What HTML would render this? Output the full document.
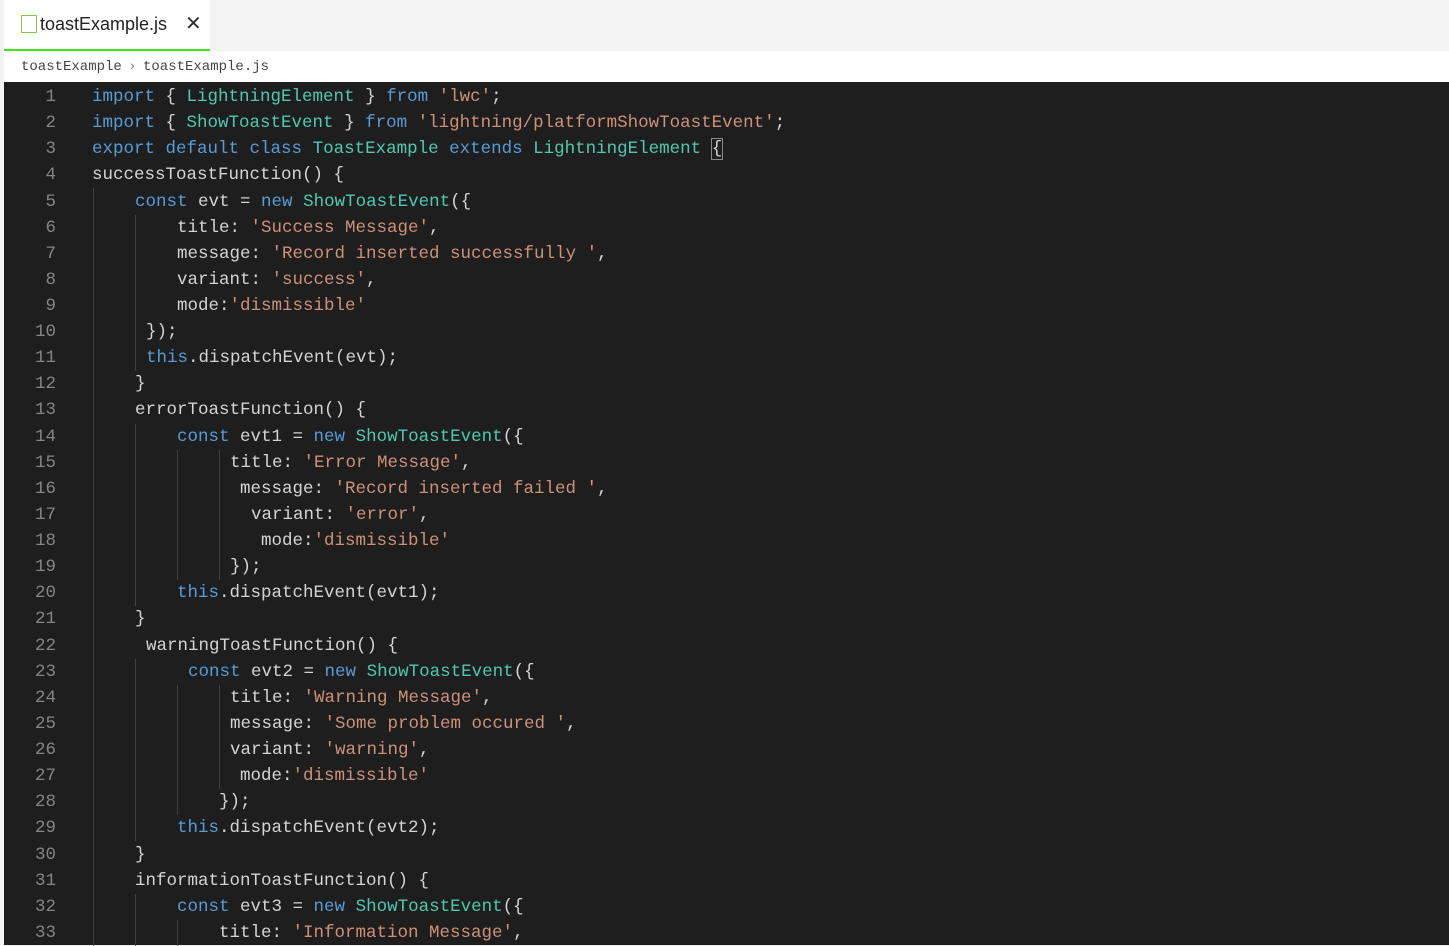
<!DOCTYPE html>
<html><head><style>
body{margin:0;width:1449px;height:945px;overflow:hidden;background:#f3f3f3;font-family:"Liberation Sans",sans-serif;position:relative}
.tab{position:absolute;left:4px;top:0;width:206px;height:49px;background:#fff;border-bottom:2px solid #3ee61c}
.tab .ic{position:absolute;left:17px;top:15px;width:14px;height:16px;border:1px solid #8bc34a}
.tab .t{position:absolute;left:36px;top:14px;font-size:18px;color:#222}
.tab .x{position:absolute;left:181px;top:11px;font-size:20px;color:#333}
.bc{position:absolute;left:4px;top:51px;width:1445px;height:31px;background:#fff;font-family:"Liberation Mono",monospace;font-size:14px;color:#444}
.bc span{position:absolute;top:8px}
.ed{position:absolute;left:4px;top:82px;width:1445px;height:863px;background:#1e1e1e}
.l{position:absolute;font-family:"Liberation Mono",monospace;font-size:17.5px;color:#d4d4d4;white-space:pre;line-height:26px;height:26px}
.n{position:absolute;left:0;width:52px;text-align:right;font-family:"Liberation Mono",monospace;font-size:17.5px;color:#858585;line-height:26px}
.k{color:#569cd6}.c{color:#4ec9b0}.s{color:#ce9178}
.g{position:absolute;width:1px;background:#404040}
</style></head><body>
<div class="tab"><div class="ic"></div><div class="t">toastExample.js</div><div class="x">✕</div></div>
<div class="bc"><span style="left:17px">toastExample</span><span style="left:124px;color:#888">›</span><span style="left:139px">toastExample.js</span></div>
<div class="ed" id="ed"></div>
<script>
const L=[
[92,'<span class="k">import</span> { <span class="c">LightningElement</span> } <span class="k">from</span> <span class="s">\'lwc\'</span>;'],
[92,'<span class="k">import</span> { <span class="c">ShowToastEvent</span> } <span class="k">from</span> <span class="s">\'lightning/platformShowToastEvent\'</span>;'],
[92,'<span class="k">export default class</span> <span class="c">ToastExample</span> <span class="k">extends</span> <span class="c">LightningElement</span> <span style="outline:1px solid #888">{</span>'],
[92,'successToastFunction() {'],
[135,'<span class="k">const</span> evt = <span class="k">new</span> <span class="c">ShowToastEvent</span>({'],
[177,'title: <span class="s">\'Success Message\'</span>,'],
[177,'message: <span class="s">\'Record inserted successfully \'</span>,'],
[177,'variant: <span class="s">\'success\'</span>,'],
[177,'mode:<span class="s">\'dismissible\'</span>'],
[146,'});'],
[146,'<span class="k">this</span>.dispatchEvent(evt);'],
[135,'}'],
[135,'errorToastFunction() {'],
[177,'<span class="k">const</span> evt1 = <span class="k">new</span> <span class="c">ShowToastEvent</span>({'],
[230,'title: <span class="s">\'Error Message\'</span>,'],
[240,'message: <span class="s">\'Record inserted failed \'</span>,'],
[251,'variant: <span class="s">\'error\'</span>,'],
[261,'mode:<span class="s">\'dismissible\'</span>'],
[230,'});'],
[177,'<span class="k">this</span>.dispatchEvent(evt1);'],
[135,'}'],
[146,'warningToastFunction() {'],
[188,'<span class="k">const</span> evt2 = <span class="k">new</span> <span class="c">ShowToastEvent</span>({'],
[230,'title: <span class="s">\'Warning Message\'</span>,'],
[230,'message: <span class="s">\'Some problem occured \'</span>,'],
[230,'variant: <span class="s">\'warning\'</span>,'],
[240,'mode:<span class="s">\'dismissible\'</span>'],
[219,'});'],
[177,'<span class="k">this</span>.dispatchEvent(evt2);'],
[135,'}'],
[135,'informationToastFunction() {'],
[177,'<span class="k">const</span> evt3 = <span class="k">new</span> <span class="c">ShowToastEvent</span>({'],
[219,'title: <span class="s">\'Information Message\'</span>,']
];
let h='';const LH=26.12,O=2;
const G=[[93,5,33],[135,6,11],[135,14,20],[135,23,29],[135,32,33],[177,15,19],[219,15,19],[177,24,28],[219,24,27],[177,33,33]];
G.forEach(g=>{h+=`<div class="g" style="left:${g[0]-4}px;top:${(g[1]-1)*LH+O}px;height:${(g[2]-g[1]+1)*LH}px"></div>`});
L.forEach((l,i)=>{const t=(i*LH+O).toFixed(1);h+=`<div class="n" style="top:${t}px">${i+1}</div><div class="l" style="left:${l[0]-4}px;top:${t}px">${l[1]}</div>`});
document.getElementById('ed').innerHTML=h;
</script>
</body></html>
